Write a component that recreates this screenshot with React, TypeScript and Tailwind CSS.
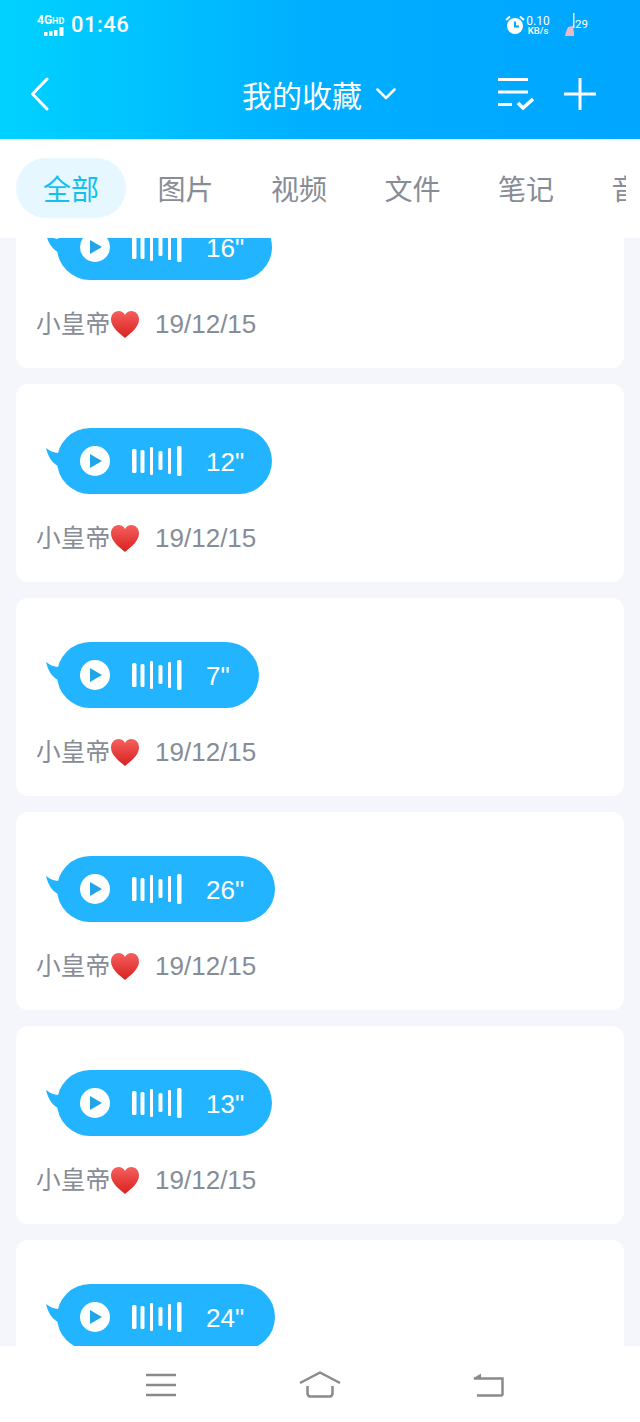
const tabs = ["图片", "视频", "文件", "笔记", "音频"];
const cards = [
  { length: '16"', width: "w-[215px]" },
  { length: '12"', width: "w-[215px]" },
  { length: '7"', width: "w-[202px]" },
  { length: '26"', width: "w-[218px]" },
  { length: '13"', width: "w-[215px]" },
  { length: '24"', width: "w-[218px]" },
];

function Wave() {
  return (
    <svg width="50" height="30" viewBox="0 0 50 30" fill="#fff" className="shrink-0">
      <rect x="0" y="3" width="4.500" height="24" rx="1.500" />
      <rect x="8.500" y="4" width="4" height="23" rx="1.500" />
      <rect x="18" y="1" width="3" height="28" rx="1" />
      <rect x="26.500" y="5" width="4" height="19" rx="1.500" />
      <rect x="36" y="2" width="3" height="26" rx="1" />
      <rect x="45" y="0" width="4.500" height="30" rx="1.500" />
    </svg>
  );
}

function Heart() {
  return (
    <svg width="30" height="29" viewBox="0 0 30 29" className="shrink-0">
      <defs>
        <linearGradient id="heart" x1="0" y1="0" x2="0" y2="1">
          <stop offset="0" stopColor="#f4605e" />
          <stop offset="1" stopColor="#d9201f" />
        </linearGradient>
      </defs>
      <path
        d="M15 28C9 23 1 17 1 9.500C1 4.500 4.500 1 8.500 1C11.300 1 13.700 2.600 15 5C16.300 2.600 18.700 1 21.500 1C25.500 1 29 4.500 29 9.500C29 17 21 23 15 28Z"
        fill="url(#heart)"
      />
    </svg>
  );
}

function VoiceCard({ length, width }: { length: string; width: string }) {
  return (
    <div className="h-[198px] shrink-0 rounded-xl bg-white pt-[44px] pl-5">
      <div className={`relative ml-[21px] flex h-[66px] items-center rounded-[33px] bg-[#22b4ff] pl-[23px] ${width}`}>
        <svg width="15" height="21" viewBox="0 0 15 21" className="absolute -left-[11px] top-[19px]">
          <path d="M0 1C4 4 8 6 15 6V20C7 18 2 10 0 1Z" fill="#22b4ff" />
        </svg>
        <div className="flex h-[30px] w-[30px] shrink-0 items-center justify-center rounded-full bg-white">
          <svg width="12" height="14" viewBox="0 0 12 14" className="ml-[2px]">
            <path d="M0 0L12 7L0 14Z" fill="#22a4e8" />
          </svg>
        </div>
        <div className="ml-[22px]">
          <Wave />
        </div>
        <span className="ml-[24px] mt-[2px] font-['Liberation_Sans',sans-serif] text-[26px] leading-none text-white">{length}</span>
      </div>
      <div className="mt-[29px] flex h-[30px] items-center text-[#878c96]">
        <span className="-mt-[3px] font-['Noto_Sans_CJK_SC',sans-serif] text-[24.700px] leading-none">小皇帝</span>
        <Heart />
        <span className="ml-[15px] font-['Liberation_Sans',sans-serif] text-[26px] leading-none">19/12/15</span>
      </div>
    </div>
  );
}

export default function App() {
  return (
    <div className="flex h-[1422px] w-[640px] flex-col overflow-hidden bg-[#f4f6fb] font-['Noto_Sans_CJK_SC',sans-serif]">
      {/* Header */}
      <div className="h-[139px] shrink-0 bg-gradient-to-r from-[#00d2ff] via-[#00aeff] to-[#00a6ff] text-white">
        {/* Status bar */}
        <div className="flex h-[50px] items-center pl-[37px] pr-[52px]">
          <div className="flex w-[30px] flex-col items-start">
            <span className="font-['Roboto',sans-serif] text-[12px] font-bold leading-[11px]">
              4G<span className="text-[9px]">HD</span>
            </span>
            <svg width="28" height="9" viewBox="0 0 28 9" fill="#fff">
              <rect x="7" y="5" width="3.500" height="4" />
              <rect x="12" y="4" width="3.500" height="5" />
              <rect x="17" y="3" width="3.500" height="6" />
              <rect x="22.500" y="0" width="4" height="9" />
            </svg>
          </div>
          <span className="ml-[4px] font-['Roboto',sans-serif] text-[22px] font-medium leading-none tracking-[0.5px]">01:46</span>
          <div className="flex-1" />
          <svg width="20" height="20" viewBox="0 0 20 20" fill="none">
            <circle cx="10" cy="11" r="8" fill="#fff" />
            <path d="M1 5L5 1.500M19 5L15 1.500" stroke="#fff" strokeWidth="2" />
            <path d="M10 6.500V11.500H14" stroke="#00a6ff" strokeWidth="2" />
          </svg>
          <div className="ml-[1px] flex w-[24px] flex-col items-center font-['Roboto',sans-serif] leading-none">
            <span className="text-[12px] leading-[10px]">0.10</span>
            <span className="text-[9.500px] font-medium leading-[9px]">KB/s</span>
          </div>
          <svg width="12" height="24" viewBox="0 0 12 24" className="ml-[14px]">
            <path d="M9 0H10.500V15H9Z" fill="#f2e8ee" />
            <path d="M4 14L9 13L10 20L10 23H1L2 19Z" fill="#eab9c6" />
          </svg>
          <span className="-ml-[1px] font-['Roboto',sans-serif] text-[11.500px] leading-none">29</span>
        </div>
        {/* Nav bar */}
        <div className="flex h-[88px] items-center pl-[30px] pr-[43px]">
          <svg width="20" height="34" viewBox="0 0 20 34" fill="none" stroke="#fff" strokeWidth="3" strokeLinecap="round" strokeLinejoin="round">
            <path d="M17 2L2.500 17L17 32" />
          </svg>
          <span className="ml-[192px] text-[30px] leading-none">我的收藏</span>
          <svg width="20" height="12" viewBox="0 0 20 12" fill="none" stroke="#fff" strokeWidth="2.500" strokeLinecap="round" strokeLinejoin="round" className="ml-[14px]">
            <path d="M1.500 1.500L10 10L18.500 1.500" />
          </svg>
          <svg width="36" height="32" viewBox="0 0 36 32" fill="none" className="ml-[102px]">
            <path d="M0 1.500H30M0 14H30M0 26.500H14" stroke="#fff" strokeWidth="3" />
            <path d="M20 25L25 30L35 21" stroke="#fff" strokeWidth="3.500" />
          </svg>
          <svg width="32" height="32" viewBox="0 0 32 32" fill="none" stroke="#fff" strokeWidth="3" className="ml-[30px]">
            <path d="M16 0V32M0 16H32" />
          </svg>
        </div>
      </div>

      {/* Tabs */}
      <div className="flex h-[99px] shrink-0 items-center bg-white pb-[2px] pl-4">
        <div className="flex w-[610px] gap-[3.500px] overflow-hidden">
          <div className="mr-[1px] flex h-[60px] w-[110px] shrink-0 items-center justify-center rounded-[30px] bg-[#e6f7ff] text-[28px] text-[#12c0ee]">
            全部
          </div>
          {tabs.map((t) => (
            <div key={t} className="flex h-[60px] w-[110px] shrink-0 items-center justify-center text-[28px] text-[#878c96]">
              {t}
            </div>
          ))}
        </div>
      </div>

      {/* List */}
      <div className="min-h-0 flex-1 overflow-hidden">
        <div className="-mt-[68px] flex flex-col gap-4 px-4">
          {cards.map((c, i) => (
            <VoiceCard key={i} length={c.length} width={c.width} />
          ))}
        </div>
      </div>

      {/* Bottom nav */}
      <div className="flex h-[76px] shrink-0 items-center bg-white pt-[1px] pl-[146px]">
        <svg width="30" height="24" viewBox="0 0 30 24" fill="none" stroke="#8a8a8a" strokeWidth="2.500">
          <path d="M0 2H30M0 12H30M0 22H30" />
        </svg>
        <svg width="42" height="27" viewBox="0 0 42 27" fill="none" stroke="#8a8a8a" strokeWidth="2.500" strokeLinejoin="round" className="ml-[123px]">
          <path d="M1 12L21 1.500L41 12" />
          <path d="M8.500 15V22C8.500 24 9.500 25.500 11.500 25.500H30.500C32.500 25.500 33.500 24 33.500 22V15" />
        </svg>
        <svg width="31" height="24" viewBox="0 0 31 24" fill="none" className="ml-[132px]">
          <path d="M0 5.500L8 0.500V5.500Z" fill="#8a8a8a" />
          <path d="M1 5.500H29.500V21C29.500 22 29 22.500 28 22.500H4" stroke="#8a8a8a" strokeWidth="2.500" />
        </svg>
      </div>
    </div>
  );
}
